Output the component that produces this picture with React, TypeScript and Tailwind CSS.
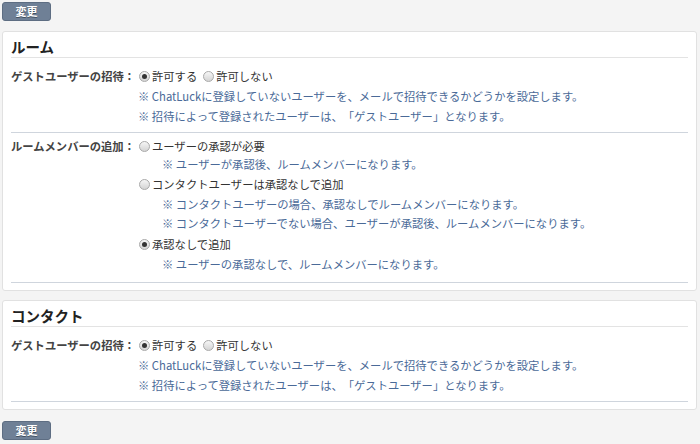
import React from 'react';

const font = { fontFamily: '"Noto Sans CJK JP", "Noto Sans", sans-serif' };

function Radio({ checked }: { checked?: boolean }) {
  return (
    <span className="relative inline-flex h-[11px] w-[11px] shrink-0 items-center justify-center rounded-full border border-[#a9a9a9] bg-gradient-to-b from-[#f6f6f6] to-[#d4d4d4]">
      {checked && <span className="h-[5px] w-[5px] rounded-full bg-[#333]" />}
    </span>
  );
}

function Option({ label, checked, className = '' }: { label: string; checked?: boolean; className?: string }) {
  return (
    <div className={`flex items-center gap-[2px] pl-[1px] text-[#333] ${className}`}>
      <Radio checked={checked} />
      <span>{label}</span>
    </div>
  );
}

function Note({ text, className = '' }: { text: string; className?: string }) {
  return <div className={`flex items-center text-[#4a6a98] ${className}`}>※ {text}</div>;
}

function Button() {
  return (
    <button className="flex h-[19px] w-[49px] items-center justify-center rounded-[3px] border border-[#5d6d82] bg-[#6f8096] text-[11px] font-bold text-white [text-shadow:0_1px_0_#44505f]">
      変更
    </button>
  );
}

function Separator({ className = '' }: { className?: string }) {
  return <div className={`border-t border-[#cfd5dd] ${className}`} />;
}

function GuestRow() {
  return (
    <div className="flex">
      <div className="w-[127px] shrink-0 font-bold leading-[20px] text-[#444]">ゲストユーザーの招待：</div>
      <div className="flex flex-col">
        <div className="flex h-[20px] items-center gap-[5px]">
          <Option label="許可する" checked />
          <Option label="許可しない" />
        </div>
        <Note className="h-[20px]" text="ChatLuckに登録していないユーザーを、メールで招待できるかどうかを設定します。" />
        <Note className="h-[20px]" text="招待によって登録されたユーザーは、「ゲストユーザー」となります。" />
      </div>
    </div>
  );
}

function Panel({ title, children }: { title: string; children: React.ReactNode }) {
  return (
    <div className="mx-[2px] mr-[3px] rounded-[3px] border border-[#e1e1e1] bg-white px-2 pb-[7px] pt-[5px]">
      <div className="h-[20px] text-[14.5px] font-bold leading-[20px] text-[#222]">{title}</div>
      <div className="border-t border-[#e3e3e3]" />
      <div className="pt-[8px]">{children}</div>
    </div>
  );
}

export default function App() {
  return (
    <div className="min-h-[444px] w-full bg-[#f4f4f4] pt-[2px] text-[11.3px] [text-spacing-trim:space-all]" style={font}>
      <div className="pl-[2px]">
        <Button />
      </div>

      <div className="mt-[10px]">
        <Panel title="ルーム">
          <GuestRow />
          <Separator className="mt-[6px]" />
          <div className="flex pt-[4px]">
            <div className="w-[127px] shrink-0 font-bold leading-[18px] text-[#444]">ルームメンバーの追加：</div>
            <div className="flex flex-col">
              <Option className="h-[18px]" label="ユーザーの承認が必要" />
              <Note className="h-[18px] pl-[24px]" text="ユーザーが承認後、ルームメンバーになります。" />
              <Option className="h-[22px]" label="コンタクトユーザーは承認なしで追加" />
              <Note className="h-[18px] pl-[24px]" text="コンタクトユーザーの場合、承認なしでルームメンバーになります。" />
              <Note className="h-[21px] pl-[24px]" text="コンタクトユーザーでない場合、ユーザーが承認後、ルームメンバーになります。" />
              <Option className="h-[21px]" label="承認なしで追加" checked />
              <Note className="h-[19px] pl-[24px]" text="ユーザーの承認なしで、ルームメンバーになります。" />
            </div>
          </div>
          <Separator className="mt-[8px]" />
        </Panel>
      </div>

      <div className="mt-[9px]">
        <Panel title="コンタクト">
          <GuestRow />
          <Separator className="mt-[6px]" />
        </Panel>
      </div>

      <div className="mt-[11px] pl-[2px]">
        <Button />
      </div>
    </div>
  );
}
